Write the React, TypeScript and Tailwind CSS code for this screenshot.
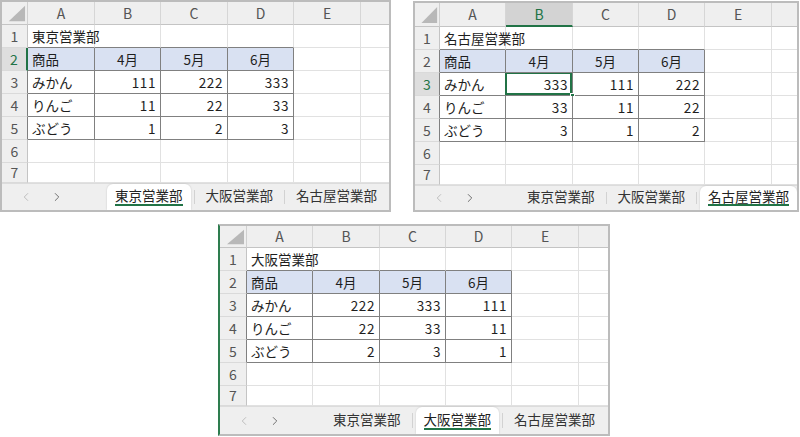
import React from "react";
import { ChevronLeft, ChevronRight } from "lucide-react";

// three Excel sheets, same layout with different numbers
type Row = [string, number, number, number];

type PanelProps = {
  title: string;
  rows: Row[];
  active: number;
  sel: "row2" | "b3" | "none";
  rowHead: string;
  cols: string[];
  headH: string;
  tabH: string;
  nav: string;
  frame: string;
};

const tabs = ["東京営業部", "大阪営業部", "名古屋営業部"];
// F column is mostly off the edge, so its header stays blank
const letters = ["A", "B", "C", "D", "E", ""];
const GREEN = "text-[#217346]";

const Corner = () => (
  <svg width="100%" height="100%" viewBox="0 0 26 23" preserveAspectRatio="none">
    <polygon points="24,4 24,20 7,20" fill="#b8b8b8" />
  </svg>
);

const Panel = ({ title, rows, active, sel, rowHead, cols, headH, tabH, nav, frame }: PanelProps) => {
  const cellText = (r: number, c: number) => {
    if (r === 1 && c === 0) return title;
    if (r === 2) return ["商品", "4月", "5月", "6月"][c] ?? "";
    if (r >= 3 && r <= 5) {
      const row = rows[r - 3];
      if (c === 0) return row[0];
      if (c <= 3) return String(row[c]);
    }
    return "";
  };

  return (
    <div className={`flex flex-col overflow-hidden bg-white border-2 border-[#bcbcbc] ${frame}`}>
      {/* column headers */}
      <div className={`flex shrink-0 ${headH}`}>
        <div className={`shrink-0 bg-[#efefef] border-r border-b border-r-[#d0d0d0] border-b-[#c4c4c4] ${rowHead}`}>
          <Corner />
        </div>
        {letters.map((l, c) => {
          const on = sel === "b3" && c === 1;
          return (
            <div
              key={c}
              className={`shrink-0 flex items-center justify-center text-[14px] border-r border-r-[#d6d6d6] ${
                on
                  ? "bg-[#d3d3d3] text-[#217346] border-b-2 border-b-[#217346]"
                  : "bg-[#efefef] text-[#555] border-b border-b-[#c4c4c4]"
              } ${cols[c]}`}
            >
              {l}
            </div>
          );
        })}
      </div>

      {/* rows 1..7 */}
      {[1, 2, 3, 4, 5, 6, 7].map((r) => {
        const rowOn = (sel === "row2" && r === 2) || (sel === "b3" && r === 3);
        const inTableRow = r >= 2 && r <= 5;
        return (
          <div key={r} className={`flex shrink-0 overflow-hidden ${r === 7 ? "h-[20px]" : "h-[23px]"}`}>
            <div
              className={`shrink-0 flex items-center justify-center text-[14px] border-b border-b-[#dadada] ${rowHead} ${
                rowOn ? `bg-[#dedede] ${GREEN}` : "bg-[#efefef] text-[#555]"
              } ${
                sel === "row2" && r === 2
                  ? "border-r-2 border-r-[#217346]"
                  : inTableRow
                  ? "border-r border-r-[#808080]"
                  : "border-r border-r-[#c4c4c4]"
              }`}
            >
              {r}
            </div>
            {letters.map((_, c) => {
              const inTable = inTableRow && c <= 3;
              const dark = inTable || (r === 1 && c <= 3);
              const text = cellText(r, c);
              const isNum = r >= 3 && r <= 5 && c >= 1 && c <= 3;
              const center = r === 2 && c >= 1 && c <= 3;
              const picked = sel === "b3" && r === 3 && c === 1;
              return (
                <div
                  key={c}
                  className={`relative shrink-0 flex items-center px-[4px] whitespace-nowrap text-[13.5px] text-[#1e1e1e] border-r border-b ${cols[c]} ${
                    inTable ? "border-r-[#808080]" : "border-r-[#e1e1e1]"
                  } ${dark ? "border-b-[#808080]" : "border-b-[#e1e1e1]"} ${
                    r === 2 && c <= 3 ? "bg-[#d9e1f2]" : ""
                  } ${isNum ? "justify-end tracking-[0.6px]" : center ? "justify-center" : "justify-start"}`}
                >
                  {text}
                  {picked && (
                    <>
                      <div className="absolute -left-px -top-px w-[calc(100%+1px)] h-[calc(100%+1px)] border-2 border-[#217346] z-10" />
                      <div className="absolute -right-[3px] -bottom-[3px] w-[5px] h-[5px] bg-[#217346] border border-white z-20" />
                    </>
                  )}
                </div>
              );
            })}
          </div>
        );
      })}

      {/* sheet tabs */}
      <div className={`flex shrink-0 bg-[#efefef] border-t border-[#dcdcdc] ${tabH}`}>
        <div className={`shrink-0 flex items-center pl-[17px] gap-[17px] ${nav}`}>
          <ChevronLeft size={14} strokeWidth={1.4} color="#b3b3b3" />
          <ChevronRight size={14} strokeWidth={1.4} color="#555555" />
        </div>
        {tabs.map((t, i) => (
          <React.Fragment key={t}>
            {i > 0 && <div className="shrink-0 w-px my-[6px] mx-[3px] bg-[#d2d2d2]" />}
            <div
              className={`relative shrink-0 flex items-center px-[8px] pb-[3px] text-[13.5px] whitespace-nowrap ${
                i === active
                  ? "bg-white rounded-t-[6px] shadow-[0_0_2px_rgba(0,0,0,0.18)] text-[#222]"
                  : "text-[#333]"
              }`}
            >
              {t}
              {i === active && (
                <div className="absolute left-[8px] right-[8px] bottom-[4px] h-[2px] bg-[#217346]" />
              )}
            </div>
          </React.Fragment>
        ))}
      </div>
    </div>
  );
};

export default function App() {
  return (
    <div className="w-[800px] h-[437px] bg-white flex flex-col font-['Noto_Sans_CJK_JP',sans-serif]">
      <div className="flex items-start">
        <Panel
          title="東京営業部"
          rows={[
            ["みかん", 111, 222, 333],
            ["りんご", 11, 22, 33],
            ["ぶどう", 1, 2, 3],
          ]}
          active={0}
          sel="row2"
          rowHead="w-[26px]"
          cols={["w-[67px]", "w-[66px]", "w-[67px]", "w-[66px]", "w-[67px]", "w-[67px]"]}
          headH="h-[23px]"
          tabH="h-[27px]"
          nav="w-[105px]"
          frame="w-[391px] h-[212px]"
        />
        <Panel
          title="名古屋営業部"
          rows={[
            ["みかん", 333, 111, 222],
            ["りんご", 33, 11, 22],
            ["ぶどう", 3, 1, 2],
          ]}
          active={2}
          sel="b3"
          rowHead="w-[25px]"
          cols={["w-[66px]", "w-[67px]", "w-[66px]", "w-[66px]", "w-[67px]", "w-[67px]"]}
          headH="h-[24px]"
          tabH="h-[25px]"
          nav="w-[104px]"
          frame="ml-[22px] mt-[1px] w-[386px] h-[211px]"
        />
      </div>
      <div className="flex mt-[12px] pl-[218px]">
        <Panel
          title="大阪営業部"
          rows={[
            ["みかん", 222, 333, 111],
            ["りんご", 22, 33, 11],
            ["ぶどう", 2, 3, 1],
          ]}
          active={1}
          sel="none"
          rowHead="w-[27px]"
          cols={["w-[66px]", "w-[67px]", "w-[66px]", "w-[66px]", "w-[67px]", "w-[67px]"]}
          headH="h-[22px]"
          tabH="h-[28px]"
          nav="w-[105px]"
          frame="w-[392px] h-[212px] border-l-[#2e7d4f]"
        />
      </div>
    </div>
  );
}
